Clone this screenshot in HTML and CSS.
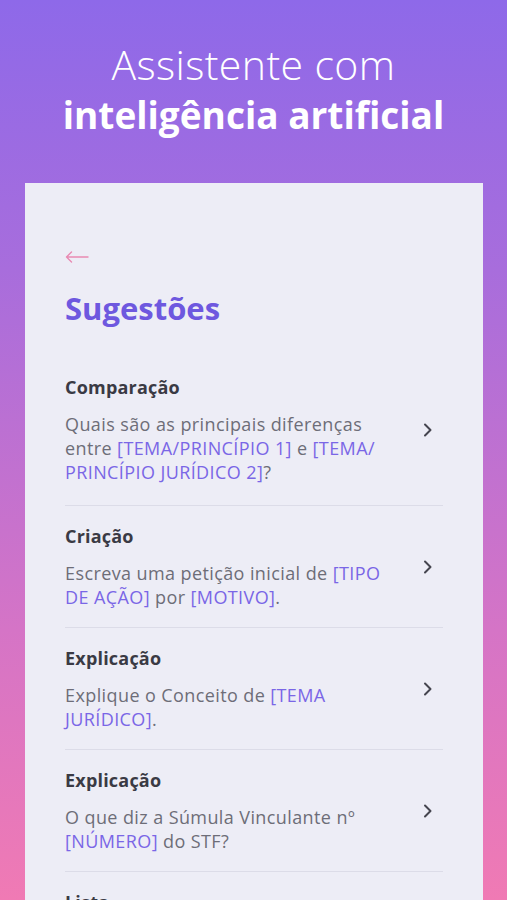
FILE: index.html
```html
<!DOCTYPE html>
<html lang="pt-BR">
<head>
<meta charset="utf-8">
<link rel="stylesheet" href="styles.css">
</head>
<body>
<div class="page">
  <header class="hero">
    <h1><span class="light">Assistente com</span><span class="bold">inteligência artificial</span></h1>
  </header>
  <main class="card">
    <div class="back">
      <svg width="24" height="12" viewBox="0 0 24 12"><path d="M23 6H1.5M6.5 1L1.5 6l5 5" fill="none" stroke="#e98ab3" stroke-width="1.4" stroke-linecap="round" stroke-linejoin="round"/></svg>
    </div>
    <h2 class="title">Sugestões</h2>
    <ul class="list">
      <li class="item">
        <div class="text">
          <div class="label">Comparação</div>
          <p class="body">Quais são as principais diferenças<br>entre <span class="ph">[TEMA/PRINCÍPIO 1]</span> e <span class="ph">[TEMA/</span><br><span class="ph">PRINCÍPIO JURÍDICO 2]</span>?</p>
        </div>
        <svg class="chev" width="10" height="14" viewBox="0 0 10 14"><path d="M2 1.5l5.5 5.5L2 12.5" fill="none" stroke="#45454f" stroke-width="2" stroke-linecap="round" stroke-linejoin="round"/></svg>
      </li>
      <li class="item">
        <div class="text">
          <div class="label">Criação</div>
          <p class="body">Escreva uma petição inicial de <span class="ph">[TIPO</span><br><span class="ph">DE AÇÃO]</span> por <span class="ph">[MOTIVO]</span>.</p>
        </div>
        <svg class="chev" width="10" height="14" viewBox="0 0 10 14"><path d="M2 1.5l5.5 5.5L2 12.5" fill="none" stroke="#45454f" stroke-width="2" stroke-linecap="round" stroke-linejoin="round"/></svg>
      </li>
      <li class="item">
        <div class="text">
          <div class="label">Explicação</div>
          <p class="body">Explique o Conceito de <span class="ph">[TEMA</span><br><span class="ph">JURÍDICO]</span>.</p>
        </div>
        <svg class="chev" width="10" height="14" viewBox="0 0 10 14"><path d="M2 1.5l5.5 5.5L2 12.5" fill="none" stroke="#45454f" stroke-width="2" stroke-linecap="round" stroke-linejoin="round"/></svg>
      </li>
      <li class="item">
        <div class="text">
          <div class="label">Explicação</div>
          <p class="body">O que diz a Súmula Vinculante nº<br><span class="ph">[NÚMERO]</span> do STF?</p>
        </div>
        <svg class="chev" width="10" height="14" viewBox="0 0 10 14"><path d="M2 1.5l5.5 5.5L2 12.5" fill="none" stroke="#45454f" stroke-width="2" stroke-linecap="round" stroke-linejoin="round"/></svg>
      </li>
      <li class="item">
        <div class="text">
          <div class="label">Lista</div>
          <p class="body">Liste os principais requisitos de <span class="ph">[TEMA]</span>.</p>
        </div>
      </li>
    </ul>
  </main>
</div>
</body>
</html>
```

FILE: styles.css
```css
* { box-sizing: border-box; }
html, body { margin: 0; padding: 0; }
body {
  width: 507px;
  height: 900px;
  overflow: hidden;
  font-family: "Open Sans", "Noto Sans", sans-serif;
  background: linear-gradient(180deg, #8e69e9 0%, #a86ddc 30%, #d574c6 70%, #f07ab4 100%);
}
.page {
  display: flex;
  flex-direction: column;
  height: 900px;
  overflow: hidden;
}
.hero {
  flex: none;
  height: 183px;
  padding-top: 39px;
}
.hero h1 {
  margin: 0;
  color: #fff;
  text-align: center;
  font-weight: 400;
  display: flex;
  flex-direction: column;
  align-items: center;
}
.light { font-weight: 300; font-size: 41px; line-height: 51px; letter-spacing: 0.4px; }
.bold { font-weight: 700; font-size: 37px; line-height: 50px; }
.card {
  margin: 0 24px 0 25px;
  flex: 1;
  background: #ededf6;
  padding: 65px 40px 0 40px;
}
.back { height: 18px; display: flex; align-items: center; }
.title {
  margin: 23px 0 0;
  font-size: 31px;
  line-height: 38px;
  font-weight: 700;
  color: #6e58df;
}
.list { list-style: none; margin: 30px 0 0; padding: 0; }
.item {
  display: flex;
  align-items: center;
  justify-content: space-between;
  padding: 18px 10px 18px 0;
  border-top: 1px solid #dcdce8;
}
.item:first-child { border-top: none; padding-bottom: 21px; }
.label {
  font-size: 18px;
  line-height: 24px;
  font-weight: 700;
  letter-spacing: 0.2px;
  color: #3a3a44;
}
.body {
  margin: 13px 0 0;
  font-size: 18px;
  line-height: 24px;
  letter-spacing: 0.4px;
  color: #6d6d78;
}
.ph { color: #7a66e6; }
.chev { flex: none; }
```
